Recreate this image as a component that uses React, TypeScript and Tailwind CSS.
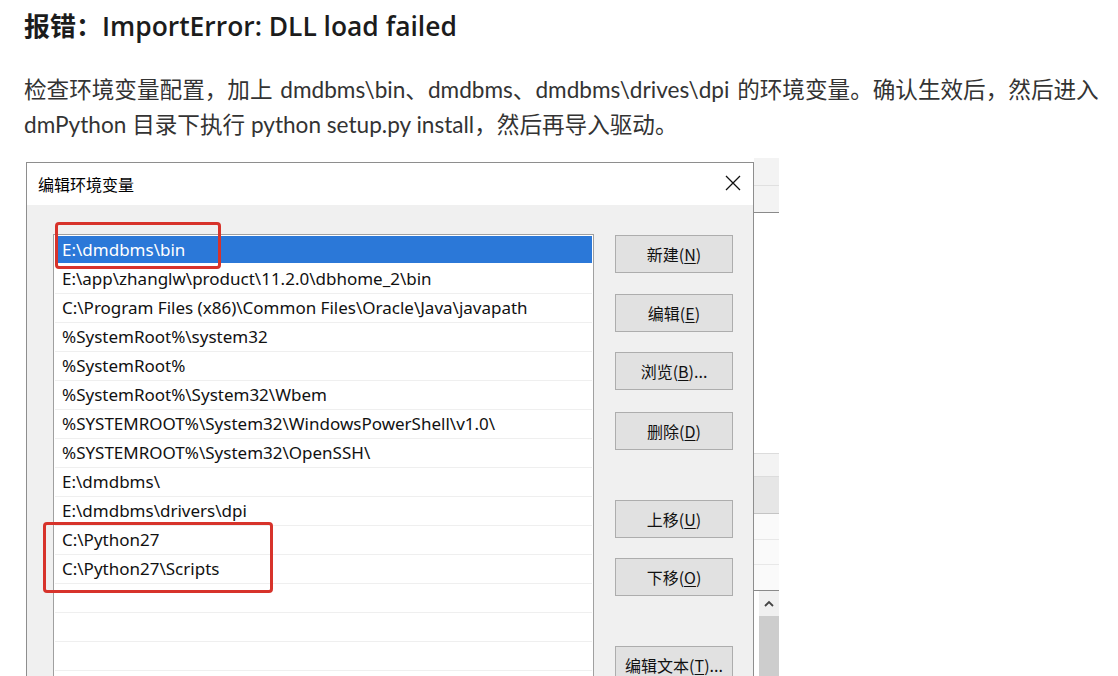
import React from "react";

const rows = [
  "E:\\dmdbms\\bin",
  "E:\\app\\zhanglw\\product\\11.2.0\\dbhome_2\\bin",
  "C:\\Program Files (x86)\\Common Files\\Oracle\\Java\\javapath",
  "%SystemRoot%\\system32",
  "%SystemRoot%",
  "%SystemRoot%\\System32\\Wbem",
  "%SYSTEMROOT%\\System32\\WindowsPowerShell\\v1.0\\",
  "%SYSTEMROOT%\\System32\\OpenSSH\\",
  "E:\\dmdbms\\",
  "E:\\dmdbms\\drivers\\dpi",
  "C:\\Python27",
  "C:\\Python27\\Scripts",
  "",
  "",
  "",
  "",
];

const buttons: { label: string; key: string; suffix?: string; mt: string }[] = [
  { label: "新建", key: "N", mt: "mt-[30px]" },
  { label: "编辑", key: "E", mt: "mt-[21px]" },
  { label: "浏览", key: "B", suffix: "...", mt: "mt-[20px]" },
  { label: "删除", key: "D", mt: "mt-[22px]" },
  { label: "上移", key: "U", mt: "mt-[50px]" },
  { label: "下移", key: "O", mt: "mt-[20px]" },
  { label: "编辑文本", key: "T", suffix: "...", mt: "mt-[50px]" },
];

export default function App() {
  return (
    <div
      className="w-[1118px] h-[676px] overflow-hidden bg-white"
      style={{ fontFamily: 'Lato, "Noto Sans CJK SC", sans-serif' }}
    >
      <h1 className="pl-[24px] pt-[7px] text-[26px] leading-[36px] text-[#1c1c1c] whitespace-nowrap">
        <span className="font-bold" style={{ fontFamily: '"Noto Sans CJK SC", sans-serif' }}>
          报错：
        </span>
        <span className="font-semibold text-[26.4px]" style={{ fontFamily: '"Open Sans", "Noto Sans CJK SC", sans-serif' }}>
          ImportError: DLL load failed
        </span>
      </h1>
      <p className="mt-[28px] pl-[24px] text-[22.6px] leading-[35px] text-[#333] whitespace-nowrap">
        <span className="[word-spacing:2px]">
          检查环境变量配置，加上 dmdbms\bin、dmdbms、dmdbms\drives\dpi 的环境变量。确认生效后，然后进入
        </span>
        <br />
        <span>dmPython 目录下执行 python setup.py install，然后再导入驱动。</span>
      </p>

      <div
        className="relative mt-[16px] flex"
        style={{ fontFamily: '"Noto Sans", "Noto Sans CJK SC", sans-serif' }}
      >
        {/* Dialog */}
        <div className="ml-[26px] mt-[4px] w-[728px] h-[600px] shrink-0 border border-[#8e8e8e] flex flex-col bg-[#f0f0f0]">
          <div className="h-[42px] bg-white flex items-center justify-between pl-[11px] pr-[12px]">
            <span className="text-[16px] text-black" style={{ fontFamily: '"Noto Sans CJK SC", sans-serif' }}>
              编辑环境变量
            </span>
            <svg width="16" height="16" viewBox="0 0 16 16" className="mb-[2px]">
              <path d="M1 1 L15 15 M15 1 L1 15" stroke="#111" strokeWidth="1.3" fill="none" />
            </svg>
          </div>
          <div className="flex flex-1">
            <div className="ml-[26px] mt-[29px] w-[541px] border border-[#a0a0a0] bg-white pt-[1px] px-[1px] self-start">
              {rows.map((r, i) => (
                <div
                  key={i}
                  className={
                    i === 0
                      ? "h-[29px] flex items-center px-[7px] text-[17px] text-white bg-[#2b78d8] border-b-[2px] border-white"
                      : "h-[29px] flex items-center px-[7px] text-[17px] text-[#111] border-b border-[#efefef]"
                  }
                >
                  <span className="whitespace-nowrap">{r}</span>
                </div>
              ))}
            </div>
            <div className="ml-[21px] flex flex-col">
              {buttons.map((b) => (
                <div
                  key={b.key}
                  className={`${b.mt} w-[118px] h-[38px] shrink-0 bg-[#e1e1e1] border border-[#adadad] flex items-center justify-center text-[16px] text-[#111]`}
                  style={{ fontFamily: '"Noto Sans CJK SC", sans-serif' }}
                >
                  {b.label}(<span className="underline underline-offset-2">{b.key}</span>){b.suffix ?? ""}
                </div>
              ))}
            </div>
          </div>
        </div>

        {/* Background window fragment on the right */}
        <div className="w-[25px] shrink-0 flex flex-col">
          <div className="h-[28px] bg-[#f3f3f3] border-b border-[#e0e0e0]" />
          <div className="h-[27px] bg-[#f3f3f3] border-b border-[#8a8a8a]" />
          <div className="h-[240px] bg-white" />
          <div className="h-[24px] bg-[#f3f3f3] border-t border-[#8a8a8a] border-b border-[#dcdcdc]" />
          <div className="h-[37px] bg-[#e6e6e6] border-b border-[#c4c4c4]" />
          <div className="h-[26px] bg-[#fafafa] border-b border-[#e8e8e8]" />
          <div className="h-[25px] bg-[#fafafa] border-b border-[#e8e8e8]" />
          <div className="h-[26px] bg-[#fafafa] border-b border-[#8a8a8a]" />
          <div className="flex flex-1">
            <div className="w-[5px] bg-white" />
            <div className="w-[20px] flex flex-col bg-[#f0f0f0]">
              <div className="h-[25px] flex items-center justify-center">
                <svg width="10" height="7" viewBox="0 0 10 7">
                  <path d="M1 6 L5 2 L9 6" stroke="#444" strokeWidth="1.8" fill="none" />
                </svg>
              </div>
              <div className="h-[200px] bg-[#cdcdcd]" />
            </div>
          </div>
        </div>

        {/* Red highlight boxes */}
        <div className="absolute left-[55px] top-[64px] w-[166px] h-[47px] border-[3px] border-[#d7332b] rounded-[4px]" />
        <div className="absolute left-[43px] top-[364px] w-[230px] h-[71px] border-[3px] border-[#d7332b] rounded-[4px]" />
      </div>
    </div>
  );
}
